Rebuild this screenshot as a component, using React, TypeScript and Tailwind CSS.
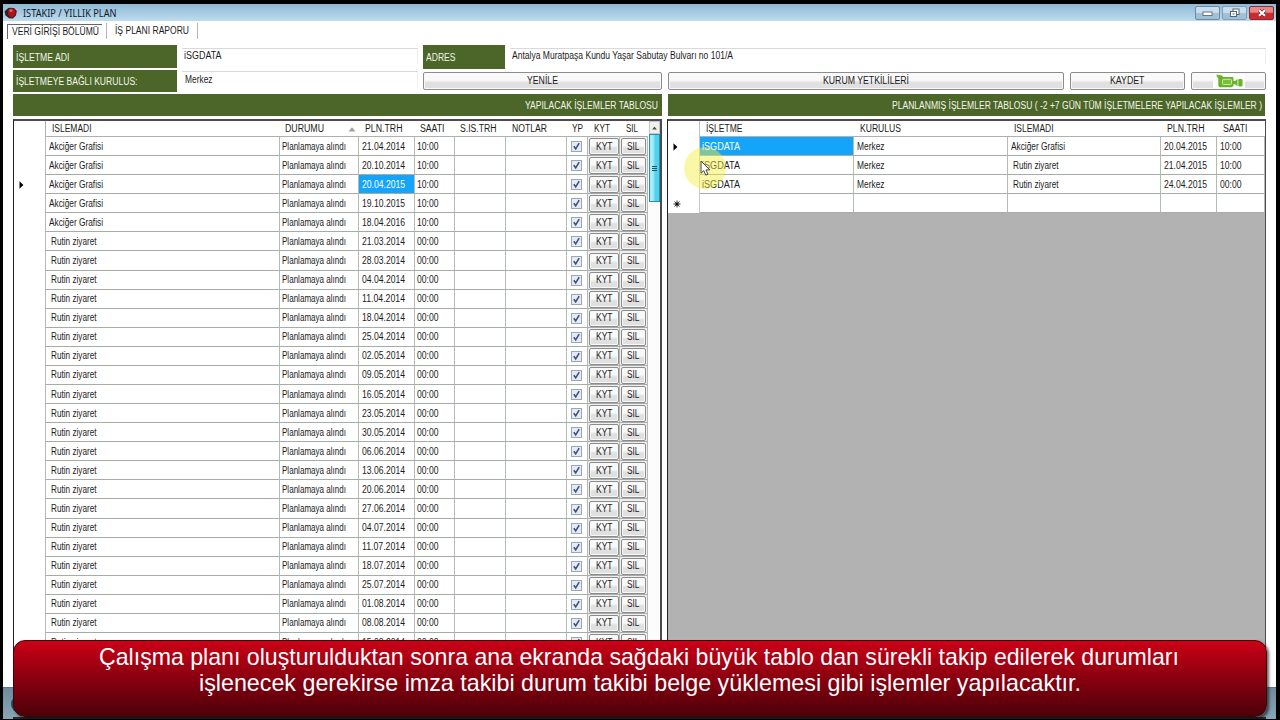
import { useLayoutEffect, useRef, type ReactNode } from "react";

/** Single line of text condensed (or stretched) to a given width. */
function Fit({ w, children, className = "" }: { w: number; children: string; className?: string }) {
  const ref = useRef<HTMLSpanElement>(null);
  useLayoutEffect(() => {
    const el = ref.current;
    if (!el) return;
    el.style.transform = "none";
    const natural = el.getBoundingClientRect().width;
    if (natural > 0) el.style.transform = `scaleX(${w / natural})`;
  }, [w, children]);
  return (
    <span className={`inline-flex shrink-0 whitespace-pre ${className}`} style={{ width: w }}>
      <span ref={ref} className="inline-block shrink-0 origin-left">
        {children}
      </span>
    </span>
  );
}

const leftCols =
  "grid grid-cols-[32px_234px_79px_56px_40px_51px_61px_21px_32px_28px]";
const rightCols = "grid grid-cols-[32px_154px_154px_153px_56px_48px]";

const dates = [
  "21.04.2014", "20.10.2014", "20.04.2015", "19.10.2015", "18.04.2016",
  "21.03.2014", "28.03.2014", "04.04.2014", "11.04.2014", "18.04.2014",
  "25.04.2014", "02.05.2014", "09.05.2014", "16.05.2014", "23.05.2014",
  "30.05.2014", "06.06.2014", "13.06.2014", "20.06.2014", "27.06.2014",
  "04.07.2014", "11.07.2014", "18.07.2014", "25.07.2014", "01.08.2014",
  "08.08.2014", "15.08.2014",
];

const planned = [
  { name: "Akciğer Grafisi", date: "20.04.2015", time: "10:00" },
  { name: "Rutin ziyaret", date: "21.04.2015", time: "10:00" },
  { name: "Rutin ziyaret", date: "24.04.2015", time: "00:00" },
];

function Cell({ children, className = "" }: { children?: ReactNode; className?: string }) {
  return (
    <div className={`flex min-w-0 items-center border-r border-b border-r-[#b4bab4] border-b-[#a6ada6] pt-px ${className}`}>
      {children}
    </div>
  );
}

function Head({ children, className = "" }: { children?: ReactNode; className?: string }) {
  return (
    <div className={`flex min-w-0 items-center border-b border-[#b0b0b0] ${className}`}>{children}</div>
  );
}

function Marker() {
  return (
    <svg width="5" height="8" viewBox="0 0 5 8" className="shrink-0">
      <path d="M0.5 0.3 L4.4 4 L0.5 7.7Z" fill="#000" />
    </svg>
  );
}

function Button({ children, className = "" }: { children: ReactNode; className?: string }) {
  return (
    <button
      className={`flex items-center justify-center rounded-[2px] border border-[#8c8c8c] bg-linear-to-b from-[#f9f9f9] from-45% to-[#e0e0e0] to-60% shadow-[inset_0_0_0_1px_#f8f8f8] ${className}`}
    >
      {children}
    </button>
  );
}

function Check() {
  return (
    <div className="flex h-[11px] w-[11px] items-center justify-center border border-[#9aa7b4] bg-[#e6ebf2]">
      <svg width="9" height="9" viewBox="0 0 9 9">
        <path d="M1.8 4.2 L3.7 6.8 L7.2 1.2" fill="none" stroke="#3a5283" strokeWidth="1.6" />
      </svg>
    </div>
  );
}

function LeftRow({ date, index }: { date: string; index: number }) {
  const lung = index < 5;
  const selected = index === 2;
  return (
    <div className={`${leftCols} h-[19.09px] shrink-0`}>
      <div className="flex items-center border-r border-[#b4bab4] pl-[5px]">{selected && <Marker />}</div>
      <Cell className={lung ? "pl-[2.5px]" : "pl-[5px]"}>
        {lung ? <Fit w={54}>Akciğer Grafisi</Fit> : <Fit w={45.5}>Rutin ziyaret</Fit>}
      </Cell>
      <Cell className="pl-[2px]"><Fit w={64}>Planlamaya alındı</Fit></Cell>
      <Cell className={selected ? "bg-[#14a5fb] pl-[2.5px] text-white" : "pl-[2.5px]"}>
        <Fit w={43}>{date}</Fit>
      </Cell>
      <Cell className="pl-[2px]"><Fit w={21.5}>{lung ? "10:00" : "00:00"}</Fit></Cell>
      <Cell />
      <Cell />
      <Cell className="pl-[4px]"><Check /></Cell>
      <Cell className="bg-[#efefef] pl-px">
        <Button className="h-[17px] w-[30px]"><Fit w={16.5}>KYT</Fit></Button>
      </Cell>
      <Cell className="bg-[#efefef] pl-px">
        <Button className="h-[17px] w-[25px]"><Fit w={12.5}>SIL</Fit></Button>
      </Cell>
    </div>
  );
}

function TitleBar() {
  return (
    <header className="flex h-[17px] shrink-0 items-center bg-linear-to-b from-[#8fb9d5] to-[#bddcee] pr-[2px] pl-px">
      <svg width="14" height="14" viewBox="0 0 14 14">
        <path d="M0.5 5.5 L3 3 L5 1.8 L10 2 L12.8 5 L12 9.5 L9 12.5 L5 12.3 L1.5 9.5Z" fill="#352023" />
        <ellipse cx="7.8" cy="6.8" rx="3.8" ry="4.6" fill="#b01219" />
        <ellipse cx="6.9" cy="4.6" rx="1.7" ry="1.4" fill="#e0665f" />
      </svg>
      <Fit w={93.5} className="ml-[5px] font-['Noto_Sans',sans-serif] text-[10px] text-[#111827]">ISTAKIP / YILLIK PLAN</Fit>
      <div className="ml-auto flex gap-[2px]">
        <div className="flex h-[14px] w-[25px] items-center justify-center rounded-[2px] border border-[#6b8ba4] bg-linear-to-b from-[#c8deee] from-45% to-[#a0c0d8] to-55%">
          <svg width="11" height="6" viewBox="0 0 11 6" className="mt-[3px]">
            <rect x="1" y="1" width="9" height="3.5" fill="#fff" stroke="#5d6872" strokeWidth="0.9" />
          </svg>
        </div>
        <div className="flex h-[14px] w-[25px] items-center justify-center rounded-[2px] border border-[#7f9eb5] bg-linear-to-b from-[#c8deee] from-45% to-[#a0c0d8] to-55%">
          <svg width="12" height="10" viewBox="0 0 12 10">
            <rect x="4" y="1" width="6" height="5.5" fill="#fff" stroke="#56636e" />
            <rect x="1.5" y="3.5" width="6" height="5" fill="#fff" stroke="#56636e" />
            <rect x="3.5" y="5.2" width="2" height="1.5" fill="#7c98ab" />
          </svg>
        </div>
        <div className="flex h-[14px] w-[25px] items-center justify-center rounded-[2px] border border-[#8b2c33] bg-linear-to-b from-[#e58a88] from-40% to-[#cc2a30] to-55%">
          <svg width="10" height="8" viewBox="0 0 10 8">
            <path d="M2 1.2 L8 6.8 M8 1.2 L2 6.8" stroke="#6c2930" strokeWidth="3.4" />
            <path d="M2 1.2 L8 6.8 M8 1.2 L2 6.8" stroke="#fff" strokeWidth="2.1" />
          </svg>
        </div>
      </div>
    </header>
  );
}

function Tabs() {
  return (
    <nav className="flex h-[24px] shrink-0 items-start pt-[2px] pl-[4px]">
      <div className="mt-px flex h-[15px] w-[95px] items-center border-t border-l border-[#666] pl-[4px]">
        <Fit w={87}>VERİ GİRİŞİ BÖLÜMÜ</Fit>
      </div>
      <div className="ml-[4px] flex h-[16px] w-[92px] items-center border-x border-[#b5b5b5] pl-[8px]">
        <Fit w={74}>İŞ PLANI RAPORU</Fit>
      </div>
    </nav>
  );
}

const green = "bg-[#4b6628] text-[#f3f6ea]";

function Form() {
  return (
    <section className="flex shrink-0 flex-col">
      <div className="flex h-[24px]">
        <div className={`${green} flex h-[23px] w-[164px] items-center pt-[2px] pl-[2.5px]`}>
          <Fit w={53.5}>İŞLETME ADI</Fit>
        </div>
        <div className="mt-[3px] ml-[5px] flex h-[16px] w-[236px] border-t border-r border-[#d9d9d9] border-r-[#efefef] pl-[2px] leading-[14px]">
          <Fit w={37.5}>iSGDATA</Fit>
        </div>
        <div className={`${green} ml-[5px] flex h-[24px] w-[82px] items-center pt-[2px] pl-[2.5px]`}>
          <Fit w={29.5}>ADRES</Fit>
        </div>
        <div className="mt-[3px] ml-[5px] flex h-[16px] w-[756px] border-t border-r border-[#d9d9d9] border-r-[#efefef] pl-[2px] leading-[14px]">
          <Fit w={221}>Antalya Muratpaşa Kundu Yaşar Sabutay Bulvarı no 101/A</Fit>
        </div>
      </div>
      <div className="flex h-[24px]">
        <div className={`${green} mt-px flex h-[22px] w-[164px] items-center pt-[2px] pl-[2.5px]`}>
          <Fit w={121.5}>İŞLETMEYE BAĞLI KURULUS:</Fit>
        </div>
        <div className="mt-[2px] ml-[5px] flex h-[17px] w-[236px] border-t border-r border-[#d9d9d9] border-r-[#efefef] pl-[3px] leading-[15px]">
          <Fit w={27.5}>Merkez</Fit>
        </div>
        <Button className="mt-[3px] ml-[5px] h-[18px] w-[239px]"><Fit w={31}>YENİLE</Fit></Button>
        <Button className="mt-[3px] ml-[6px] h-[18px] w-[396px]"><Fit w={86}>KURUM YETKİLİLERİ</Fit></Button>
        <Button className="mt-[3px] ml-[6px] h-[18px] w-[115px]"><Fit w={34.5}>KAYDET</Fit></Button>
        <Button className="mt-[3px] ml-[6px] h-[18px] w-[75px]">
          <svg width="32" height="14" viewBox="0 0 32 14">
            <rect width="32" height="14" fill="#fcfdfa" />
            <path d="M3.5 0.6 L9 1.4 L10 3 L20 3 L20.5 5 V12 L18.5 13.2 H6.5 L5.3 12 V4.2 L3.8 2.6Z" fill="#68b32a" />
            <rect x="9.5" y="5.3" width="9" height="5.2" rx="0.8" fill="#79c238" stroke="#c6eba0" strokeWidth="1" />
            <path d="M20 7 L22 7 L24.5 5 V12.2 L22 10.2 L20 10.2Z" fill="#68b32a" />
            <rect x="25.3" y="5" width="4.2" height="7.6" rx="1.3" fill="#68b32a" />
          </svg>
        </Button>
      </div>
    </section>
  );
}

function LeftGrid() {
  return (
    <div className="flex h-[557px] w-[649px] border-t-2 border-r-2 border-l border-[#4b4b4f] border-l-[#222]">
      <div className="flex w-[634px] flex-col overflow-hidden">
        <div className={`${leftCols} h-[16px] shrink-0`}>
          <div className="border-r border-[#b0b0b0]" />
          <Head className="pl-[6px]"><Fit w={39.5}>ISLEMADI</Fit></Head>
          <Head className="pl-[5px]">
            <Fit w={39}>DURUMU</Fit>
            <svg width="8" height="5" viewBox="0 0 8 5" className="ml-[24px] mt-px">
              <path d="M4 0.3 L7.5 4.6 H0.5Z" fill="#a0a0a0" />
            </svg>
          </Head>
          <Head className="pl-[5.5px]"><Fit w={37.5}>PLN.TRH</Fit></Head>
          <Head className="pl-[5px]"><Fit w={24.5}>SAATI</Fit></Head>
          <Head className="pl-[5px]"><Fit w={36.5}>S.IS.TRH</Fit></Head>
          <Head className="pl-[6px]"><Fit w={35}>NOTLAR</Fit></Head>
          <Head className="pl-[5px]"><Fit w={11}>YP</Fit></Head>
          <Head className="pl-[6px]"><Fit w={16}>KYT</Fit></Head>
          <Head className="pl-[6px]"><Fit w={12}>SIL</Fit></Head>
        </div>
        {dates.map((d, i) => (
          <LeftRow key={d + i} date={d} index={i} />
        ))}
      </div>
      <div className="flex flex-1 flex-col bg-[#fcfcfc] pl-px">
        <div className="flex h-[13px] w-[11px] items-center justify-center border border-[#c8c8c8] bg-[#f0f0f0]">
          <svg width="5" height="4" viewBox="0 0 5 4">
            <path d="M2.5 0.5 L4.8 3.6 H0.2Z" fill="#4c4c4c" />
          </svg>
        </div>
        <div className="flex h-[68px] w-[11px] flex-col items-center justify-center gap-px border border-[#2c8fae] bg-linear-to-r from-[#a6ecf9] from-30% to-[#4fd2ee] to-60%">
          <div className="h-px w-[5px] bg-[#1e5366]" />
          <div className="h-px w-[5px] bg-[#1e5366]" />
          <div className="h-px w-[5px] bg-[#1e5366]" />
        </div>
      </div>
    </div>
  );
}

function RightGrid() {
  return (
    <div className="flex h-[557px] w-[599px] flex-col border-t-2 border-r border-l border-[#4b4b4f] border-l-[#222] bg-[#b2b2b2]">
      <div className={`${rightCols} h-[16px] shrink-0 bg-white`}>
        <div className="border-r border-[#c0c0c0]" />
        <Head className="pl-[6px]"><Fit w={36.5}>İŞLETME</Fit></Head>
        <Head className="pl-[6px]"><Fit w={41}>KURULUS</Fit></Head>
        <Head className="pl-[5.5px]"><Fit w={39.5}>ISLEMADI</Fit></Head>
        <Head className="pl-[6px]"><Fit w={37.5}>PLN.TRH</Fit></Head>
        <Head className="pl-[6px]"><Fit w={24.5}>SAATI</Fit></Head>
      </div>
      {planned.map((p, i) => (
        <div key={p.date} className={`${rightCols} h-[19.09px] shrink-0 bg-white`}>
          <div className="flex items-center border-r border-[#c8c8c8] pl-[5px]">{i === 0 && <Marker />}</div>
          <Cell className={i === 0 ? "bg-[#14a5fb] pl-[2px] text-white" : "pl-[2px]"}>
            <Fit w={38}>iSGDATA</Fit>
          </Cell>
          <Cell className="pl-[2.5px]"><Fit w={27.5}>Merkez</Fit></Cell>
          <Cell className={i === 0 ? "pl-[2.5px]" : "pl-[5px]"}>
            <Fit w={i === 0 ? 54 : 45.5}>{p.name}</Fit>
          </Cell>
          <Cell className="pl-[3px]"><Fit w={43}>{p.date}</Fit></Cell>
          <Cell className="pl-[2.5px]"><Fit w={21.5}>{p.time}</Fit></Cell>
        </div>
      ))}
      <div className={`${rightCols} h-[19.09px] shrink-0 bg-white`}>
        <div className="flex items-center border-r border-[#c8c8c8] pl-[5px]">
          <svg width="8" height="8" viewBox="0 0 8 8">
            <path d="M4 0.5V7.5 M0.5 4H7.5 M1.5 1.5L6.5 6.5 M6.5 1.5L1.5 6.5" stroke="#222" strokeWidth="0.9" />
            <circle cx="4" cy="4" r="1.6" fill="#111" />
          </svg>
        </div>
        <Cell />
        <Cell />
        <Cell />
        <Cell />
        <Cell />
      </div>
    </div>
  );
}

export default function App() {
  return (
    <div className="relative h-[720px] w-[1280px] overflow-hidden bg-black pt-[4px] pl-[3px] font-['Liberation_Sans',Arial,sans-serif] text-[10px] leading-[12px] text-[#1c1c1c]">
      <div className="flex h-[715px] w-[1273px] flex-col bg-white">
        <TitleBar />
        <Tabs />
        <main className="flex h-[642px] shrink-0 flex-col pl-[10px]">
          <Form />
          <div className="flex h-[26px] shrink-0 gap-[6px] pt-px">
            <div className={`${green} flex h-[22px] w-[649px] items-center justify-end pt-px pr-[4px]`}>
              <Fit w={133}>YAPILACAK İŞLEMLER TABLOSU</Fit>
            </div>
            <div className={`${green} flex h-[22px] w-[597px] items-center justify-end pt-px pr-[3px]`}>
              <Fit w={370}>PLANLANMIŞ İŞLEMLER TABLOSU ( -2 +7 GÜN TÜM İŞLETMELERE YAPILACAK İŞLEMLER )</Fit>
            </div>
          </div>
          <div className="flex gap-[5px]">
            <LeftGrid />
            <RightGrid />
          </div>
        </main>
        <footer className="flex flex-1 items-end border-t border-[#5f7685] bg-linear-to-b from-[#6f8c9f] to-[#8aa5b5]">
          <div className="mb-[6px] ml-[8px] h-[18px] w-[18px] rounded-full bg-[#174a63]" />
        </footer>
      </div>

      <div className="absolute top-[147px] left-[684px] h-[42px] w-[42px] rounded-full bg-[#f5ee3c]/45" />
      <svg className="absolute top-[160px] left-[700px]" width="12" height="17" viewBox="0 0 12 17">
        <path
          d="M1 1 V13.2 L3.8 10.7 L5.8 15.2 L8 14.2 L6 9.9 H9.8Z"
          fill="#fff"
          stroke="#444"
          strokeWidth="1"
        />
      </svg>

      <div className="absolute top-[717px] left-[13px] h-[2px] w-[1253px] bg-[#262c30]" />
      <div className="absolute top-[640px] left-[13px] flex h-[77px] w-[1254px] flex-col items-start rounded-[12px] border border-[#3d0508] bg-linear-to-b from-[#cb0016] to-[#4d0008] pt-[3px] text-[24px] leading-[26px] text-white shadow-[2px_2px_3px_rgba(0,0,0,0.6)]">
        <Fit w={1080} className="ml-[85px]">Çalışma planı oluşturulduktan sonra ana ekranda sağdaki büyük tablo dan sürekli takip edilerek durumları</Fit>
        <Fit w={882} className="ml-[185px]">işlenecek gerekirse imza takibi durum takibi belge yüklemesi gibi işlemler yapılacaktır.</Fit>
      </div>
    </div>
  );
}
